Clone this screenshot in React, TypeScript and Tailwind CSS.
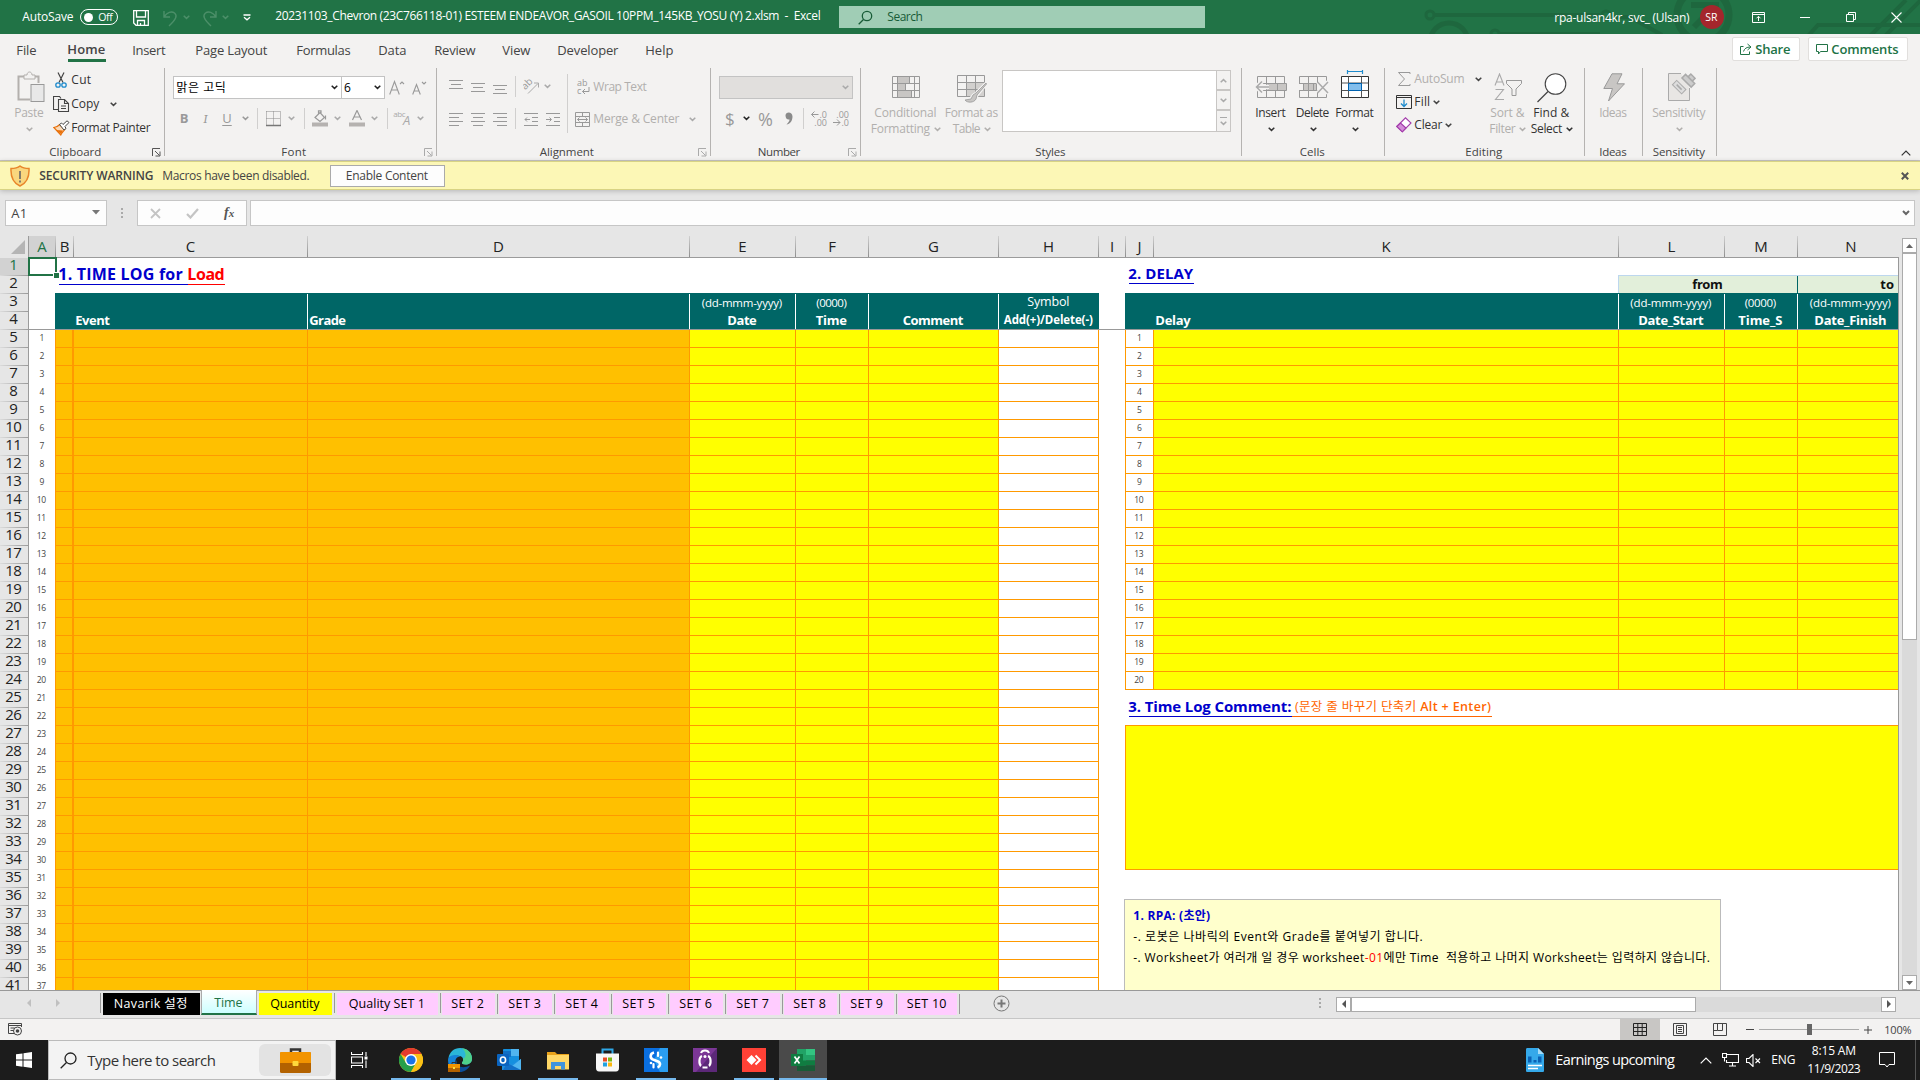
import React, { useLayoutEffect, useRef, useState } from "react";

type Kids = { children?: React.ReactNode };

/** Single line of text whose tracking is adjusted so that it fills `w` pixels. */
function T({ w, className = "", children }: Kids & { w: number; className?: string }) {
  const ref = useRef<HTMLSpanElement>(null);
  const [track, setTrack] = useState(0);
  useLayoutEffect(() => {
    const el = ref.current;
    if (!el) return;
    const n = (el.textContent || "").length;
    const natural = el.getBoundingClientRect().width;
    if (n > 1) setTrack((w - natural) / n);
  }, [w]);
  return (
    <span className={"block shrink-0 whitespace-pre -indent-[0.7px] " + className} style={{ width: w, letterSpacing: track }}>
      <span ref={ref}>{children}</span>
    </span>
  );
}

function Svg({ w, h, className = "", children }: Kids & { w: number; h: number; className?: string }) {
  return (
    <svg width={w} height={h} viewBox={`0 0 ${w} ${h}`} fill="none" className={"block shrink-0 " + className}>
      {children}
    </svg>
  );
}

const Chev = ({ className = "text-[#444]" }: { className?: string }) => (
  <Svg w={7} h={5} className={className}>
    <path d="M0.7 0.8 3.5 3.4 6.3 0.8" stroke="currentColor" strokeWidth="1.5" />
  </Svg>
);

const Launcher = ({ className = "text-[#aaa]" }: { className?: string }) => (
  <Svg w={9} h={9} className={className}>
    <path d="M0.5 8V0.5H8M3 3l4.5 4.5M8 3.5V8H3.5" stroke="currentColor" />
  </Svg>
);

const Sep = ({ className = "h-[21px]" }: { className?: string }) => <div className={"w-px shrink-0 bg-[#d0cfce] " + className} />;

/* ---------------------------------------------------------------- title bar */

function Circuit() {
  return (
    <svg width="500" height="34" viewBox="1420 0 500 34" fill="none" stroke="#1d6039" strokeWidth="4" className="absolute right-0 top-0 opacity-60">
      <circle cx="1430" cy="15" r="4" strokeWidth="3" />
      <path d="M1434 15H1600" />
      <circle cx="1449" cy="42" r="19" strokeWidth="5" />
      <circle cx="1495" cy="34" r="4" strokeWidth="3" />
      <path d="M1500 34h100" />
      <circle cx="1606" cy="15" r="4" strokeWidth="3" />
      <path d="M1612 17h18l32 18" />
      <circle cx="1703" cy="15" r="26" strokeWidth="7" />
      <path d="M1691 5h25v20M1714 7l-20 20" strokeWidth="6" />
      <path d="M1808 36l10-11h102M1870 36l36-36M1885 36l36-36" />
    </svg>
  );
}

function TitleBar() {
  return (
    <div className="relative flex h-[34px] items-center bg-[#217346] text-[12px] text-white">
      <Circuit />
      <div className="relative flex h-full w-full items-center">
        <T w={51} className="ml-[23px]">AutoSave</T>
        <div className="ml-[6px] flex h-[16px] w-[38px] items-center rounded-full border border-white">
          <div className="ml-[3px] size-[9px] rounded-full bg-white" />
          <T w={14} className="ml-[6px] text-[10.500px]">Off</T>
        </div>
        <Svg w={16} h={16} className="ml-[15px] mt-[2px]">
          <path d="M0.7 0.7h14.6v14.6H3L0.7 13zM3.5 1v6h9V1M4.5 15v-4.5h7V15M7.5 13v2" stroke="#fff" strokeWidth="1.3" />
        </Svg>
        <Svg w={15} h={17} className="ml-[14px] mt-[2px] text-[#4c8f69]">
          <path d="M1 1v6h6M1.3 6.5C4 2.500 8.500.8 11.500 3c3 2.500 2 6-5.500 13" stroke="currentColor" strokeWidth="1.4" />
        </Svg>
        <div className="ml-[5px]"><Chev className="text-[#4c8f69]" /></div>
        <Svg w={15} h={17} className="ml-[12px] mt-[2px] text-[#4c8f69]">
          <path d="M14 1v6H8M13.700 6.500C11 2.500 6.500.8 3.500 3c-3 2.500-2 6 5.500 13" stroke="currentColor" strokeWidth="1.4" />
        </Svg>
        <div className="ml-[5px]"><Chev className="text-[#4c8f69]" /></div>
        <Svg w={8} h={7} className="ml-[14px]">
          <path d="M0.500 1h7M1 3.300l3 2.500 3-2.500" stroke="#fff" strokeWidth="1.3" />
        </Svg>
        <T w={545} className="ml-[25px] mb-[2px]">{"20231103_Chevron (23C766118-01) ESTEEM ENDEAVOR_GASOIL 10PPM_145KB_YOSU (Y) 2.xlsm  -  Excel"}</T>
        <div className="ml-[18px] flex h-[22px] w-[366px] items-center bg-[#a0cdb5] text-[#185c37]">
          <Svg w={15} h={15} className="ml-[19px]">
            <circle cx="9" cy="6" r="4.700" stroke="currentColor" strokeWidth="1.3" />
            <path d="M5.500 9.500 0.700 14.300" stroke="currentColor" strokeWidth="1.3" />
          </Svg>
          <T w={35} className="ml-[15px]">Search</T>
        </div>
        <T w={135} className="ml-[350px] mt-[1px]">rpa-ulsan4kr, svc_ (Ulsan)</T>
        <div className="ml-[10px] flex size-[24px] items-center justify-center rounded-full bg-[#a4262c] text-[10.500px]"><T w={12}>SR</T></div>
        <Svg w={13} h={11} className="ml-[28px]">
          <path d="M0.500 0.500h12v10H0.500zM1 2.500h11M6.500 9V4.500M4.500 6.300l2-2 2 2" stroke="#fff" />
        </Svg>
        <div className="ml-[35px] h-px w-[10px] bg-white" />
        <Svg w={10} h={10} className="ml-[36px]">
          <path d="M0.500 2.500h7v7h-7zM2.500 2.500v-2h7v7h-2" stroke="#fff" />
        </Svg>
        <Svg w={11} h={11} className="ml-[35px]">
          <path d="M0.500 0.500l10 10M10.500 0.500l-10 10" stroke="#fff" strokeWidth="1.1" />
        </Svg>
      </div>
    </div>
  );
}

/* --------------------------------------------------------------------- tabs */

function TabRow() {
  return (
    <div className="flex h-[34px] items-start text-[13px] text-[#444]">
      <div className="flex h-[32px] items-center">
        <T w={20} className="ml-[17px]">File</T>
        <div className="ml-[31px] flex h-[32px] w-[38px] flex-col font-semibold">
          <div className="flex h-[25px] items-end pb-[3px]"><T w={38}>Home</T></div>
          <div className="h-[3px] bg-[#217346]" />
        </div>
        <T w={33} className="ml-[27px]">Insert</T>
        <T w={72} className="ml-[30px]">Page Layout</T>
        <T w={54} className="ml-[29px]">Formulas</T>
        <T w={28} className="ml-[28px]">Data</T>
        <T w={41} className="ml-[28px]">Review</T>
        <T w={28} className="ml-[27px]">View</T>
        <T w={61} className="ml-[27px]">Developer</T>
        <T w={28} className="ml-[27px]">Help</T>
      </div>
      <div className="ml-auto mr-[12px] mt-[3px] flex gap-[8px] font-semibold text-[#217346]">
        <div className="flex h-[24px] w-[68px] items-center rounded-[2px] border border-[#e1dfdd] bg-white">
          <Svg w={12} h={12} className="ml-[7px]">
            <path d="M3.500 3.500h-3v8h9V8.500M7.500 1l3.500 3-3.500 3M10.500 4C6.500 4 4.500 5.500 3.500 8.500" stroke="currentColor" />
          </Svg>
          <T w={35} className="ml-[4px]">Share</T>
        </div>
        <div className="flex h-[24px] w-[100px] items-center rounded-[2px] border border-[#e1dfdd] bg-white">
          <Svg w={12} h={11} className="ml-[7px]">
            <path d="M0.500 0.500h11v7H4.500L2.500 10V7.500h-2z" stroke="currentColor" />
          </Svg>
          <T w={67} className="ml-[4px]">Comments</T>
        </div>
      </div>
    </div>
  );
}

/* ------------------------------------------------------------------- ribbon */

function Group({ width, label, labelW, launcher, children }: Kids & { width: string; label: string; labelW: number; launcher?: string }) {
  return (
    <div className={"flex h-[88px] shrink-0 flex-col border-r border-[#b5b3b1] " + width}>
      <div className="flex h-[76px] shrink-0">{children}</div>
      <div className="flex h-[16px] shrink-0 items-center text-[11.500px] text-[#444]">
        <div className="flex grow justify-center">
          <T w={labelW}>{label}</T>
        </div>
        {launcher && <div className="mr-[3px] w-[9px]"><Launcher className={launcher} /></div>}
      </div>
    </div>
  );
}

const Lines = ({ d, className = "" }: { d: string; className?: string }) => (
  <Svg w={14} h={14} className={className}>
    <path d={d} stroke="#999" />
  </Svg>
);

function ClipboardGroup() {
  return (
    <Group width="w-[165px]" label="Clipboard" labelW={52} launcher="text-[#555]">
      <div className="ml-[15px] flex w-[29px] flex-col items-center pt-[3px]">
        <Svg w={28} h={32} className="ml-[2px]">
          <path d="M8 5.500H1.500v23H13M17 5.500h4.500V12" stroke="#b3b0ad" strokeWidth="2" />
          <path d="M7 8V4h3c0-4 5-4 5 0h3v4z" fill="#f3f2f1" stroke="#b3b0ad" />
          <rect x="14" y="13.500" width="13" height="17" fill="#e8e8e8" stroke="#999" />
        </Svg>
        <T w={29} className="mt-[4px] text-[12px] text-[#b1afad]">Paste</T>
        <div className="mt-[8px]"><Chev className="text-[#b1afad]" /></div>
      </div>
      <div className="ml-[9px] flex flex-col text-[12px] text-[#333]">
        <div className="flex h-[24px] items-center">
          <Svg w={16} h={16} className="ml-0">
            <path d="M5 0.500l5 10M11 0.500l-5 10" stroke="#444" strokeWidth="1.2" />
            <circle cx="5" cy="13" r="2.200" stroke="#1e8bcd" strokeWidth="1.300" />
            <circle cx="11" cy="13" r="2.200" stroke="#1e8bcd" strokeWidth="1.300" />
          </Svg>
          <T w={20} className="ml-[3px]">Cut</T>
        </div>
        <div className="flex h-[24px] items-center">
          <Svg w={17} h={16}>
            <path d="M5.500 13.500h-5V0.500h6l1.500 2M5.500 3.500h6l4 4v8h-10zM11.500 3.500v4h4M8 10h5M8 12.500h5" stroke="#444" strokeWidth="1.1" />
          </Svg>
          <T w={28} className="ml-[2px]">Copy</T>
          <div className="ml-[10px]"><Chev /></div>
        </div>
        <div className="flex h-[24px] items-center">
          <Svg w={17} h={16}>
            <path d="M0.800 7.500c3 0 4.500-1.500 6-3l5 5c-1.500 2-3 3.500-4 5.500z" fill="#fbd9b5" stroke="#e8700a" strokeWidth="1.200" />
            <path d="M3 10l5 4 2-3.500z" fill="#e8700a" />
            <path d="M6.500 4.500l2-1.500L10 4.500 14 0.800 16 2.500 12 6.500l1 2-2 1.500z" fill="#fff" stroke="#444" />
          </Svg>
          <T w={79} className="ml-[2px]">Format Painter</T>
        </div>
      </div>
    </Group>
  );
}

function FontGroup() {
  return (
    <Group width="w-[272px]" label="Font" labelW={25} launcher="text-[#aaa]">
      <div className="flex flex-col pl-[8px] pt-[8px]">
        <div className="flex h-[23px] items-center">
          <div className="flex h-[23px] w-[169px] items-center border border-[#c3c3c3] bg-white text-[12px] text-black">
            <T w={50} className="ml-[3px]">맑은 고딕</T>
            <div className="ml-auto mr-[3px]"><Chev className="text-[#222]" /></div>
          </div>
          <div className="flex h-[23px] w-[43px] items-center border border-l-0 border-[#c3c3c3] bg-white text-[12px]">
            <span className="ml-[2px]">6</span>
            <div className="ml-auto mr-[3px]"><Chev className="text-[#222]" /></div>
          </div>
          <Svg w={16} h={16} className="ml-[4px] text-[#999]">
            <path d="M0.700 14.500 5.500 1.500 10.300 14.500M2.300 10h6.400M11 4l2-2 2 2" stroke="currentColor" strokeWidth="1.1" />
          </Svg>
          <Svg w={15} h={16} className="ml-[7px] text-[#999]">
            <path d="M0.700 14.500 4.500 4.500 8.300 14.500M2 11h5M10 2l2 2 2-2" stroke="currentColor" strokeWidth="1.1" />
          </Svg>
        </div>
        <div className="mt-[9px] flex h-[21px] items-center text-[13px] text-[#999]">
          <span className="w-[22px] text-center font-bold">B</span>
          <span className="w-[21px] text-center font-serif italic">I</span>
          <span className="w-[22px] text-center underline underline-offset-2">U</span>
          <div className="ml-[4px]"><Chev className="text-[#999]" /></div>
          <Sep className="ml-[8px] h-[21px]" />
          <Svg w={15} h={16} className="ml-[8px]">
            <path d="M0.500 0.500h14M0.500 0.500v14M14.500 0.500v14M7.500 0.500v14M0.500 7.500h14" stroke="#888" strokeDasharray="1 1" />
            <path d="M0 14.500h15" stroke="#777" strokeWidth="1.500" />
          </Svg>
          <div className="ml-[7px]"><Chev className="text-[#aaa]" /></div>
          <Sep className="ml-[9px] h-[21px]" />
          <Svg w={16} h={17} className="ml-[7px]">
            <path d="M3 7.500l5-5 4.500 5-4.500 4zM6.500 4V0.800h2.500v3M13.500 5.500v4" stroke="#999" strokeWidth="1.200" />
            <path d="M0 12.500h16v4H0z" fill="#b5b2b0" />
          </Svg>
          <div className="ml-[6px]"><Chev className="text-[#aaa]" /></div>
          <Svg w={16} h={17} className="ml-[8px]">
            <path d="M3.500 10 8 0.500 12.500 10M5 7h6" stroke="#999" strokeWidth="1.200" />
            <path d="M0 12.500h16v4H0z" fill="#b5b2b0" />
          </Svg>
          <div className="ml-[6px]"><Chev className="text-[#aaa]" /></div>
          <Sep className="ml-[9px] h-[21px]" />
          <div className="ml-[6px] flex h-[18px] w-[17px] items-start text-[#aaa]">
            <T w={12} className="text-[8px]">abc</T>
            <span className="-ml-[3px] mt-[4px] text-[13px] italic">A</span>
          </div>
          <div className="ml-[6px]"><Chev className="text-[#aaa]" /></div>
        </div>
      </div>
    </Group>
  );
}

function AlignmentGroup() {
  return (
    <Group width="w-[274px]" label="Alignment" labelW={54} launcher="text-[#aaa]">
      <div className="flex flex-col pl-[12px] pt-[8px]">
        <div className="flex h-[21px] items-center">
          <Lines className="mb-[4px]" d="M0 2.500h14M2 6.500h10M0 10.500h14" />
          <Lines className="ml-[8px]" d="M0 3.500h14M2 7.500h10M0 11.500h14" />
          <Lines className="ml-[8px] mt-[4px]" d="M0 3.500h14M2 7.500h10M0 11.500h14" />
          <Sep className="ml-[8px] h-[21px]" />
          <Svg w={17} h={17} className="ml-[7px]">
            <path d="M5 15.500 15 5.500M11 5h4.500v4.500" stroke="#aaa" />
            <text x="0" y="9" fill="#999" fontSize="10" transform="rotate(-45 5 8)">ab</text>
          </Svg>
          <div className="ml-[4px]"><Chev className="text-[#aaa]" /></div>
        </div>
        <div className="mt-[11px] flex h-[21px] items-center">
          <Lines d="M0 1.500h14M0 5.500h10M0 9.500h14M0 13.500h10" />
          <Lines className="ml-[8px]" d="M0 1.500h14M2 5.500h10M0 9.500h14M2 13.500h10" />
          <Lines className="ml-[8px]" d="M0 1.500h14M4 5.500h10M0 9.500h14M4 13.500h10" />
          <Sep className="ml-[8px] h-[21px]" />
          <Lines className="ml-[8px]" d="M0 1.500h14M8 5.500h6M8 9.500h6M0 13.500h14M1 7.500h5M3 5.500l-2 2 2 2" />
          <Lines className="ml-[8px]" d="M0 1.500h14M8 5.500h6M8 9.500h6M0 13.500h14M0 7.500h5M3.500 5.500l2 2-2 2" />
        </div>
      </div>
      <Sep className="ml-[7px] mt-[6px] h-[59px]" />
      <div className="flex flex-col pl-[7px] pt-[7px] text-[12px] text-[#b1afad]">
        <div className="flex h-[24px] items-center">
          <div className="flex w-[19px] flex-col pl-[2px] text-[9px] text-[#999]">
            <span className="h-[8px] leading-[8px]">ab</span>
            <span className="flex h-[8px] items-center leading-[8px]">
              c
              <Svg w={9} h={8}>
                <path d="M8 0v4.500H1.500M4 2 1.500 4.500 4 7" stroke="#999" />
              </Svg>
            </span>
          </div>
          <T w={53}>Wrap Text</T>
        </div>
        <div className="mt-[8px] flex h-[24px] items-center">
          <Svg w={15} h={15}>
            <path d="M0.500 0.500h14v14h-14zM0.500 4.500h14M0.500 10.500h14M7.500 0.500v4M7.500 10.500v4M2.500 7.500h10M4.500 5.500l-2 2 2 2M10.500 5.500l2 2-2 2" stroke="#999" />
          </Svg>
          <T w={86} className="ml-[4px]">Merge &amp; Center</T>
          <div className="ml-[9px]"><Chev className="text-[#aaa]" /></div>
        </div>
      </div>
    </Group>
  );
}

const Decimal = ({ a, b, left }: { a: string; b: string; left?: boolean }) => (
  <div className="flex w-[16px] flex-col items-end text-[9px] text-[#999]">
    <span className="flex h-[8px] items-center leading-[8px]">
      {left && <Svg w={8} h={7}><path d="M0.500 3.500h7M3.500 0.500l-3 3 3 3" stroke="#999" /></Svg>}
      {a}
    </span>
    <span className="flex h-[8px] items-center leading-[8px]">
      {!left && <Svg w={8} h={7}><path d="M0 3.500h7M4 0.500l3 3-3 3" stroke="#999" /></Svg>}
      {b}
    </span>
  </div>
);

function NumberGroup() {
  return (
    <Group width="w-[150px]" label="Number" labelW={42} launcher="text-[#aaa]">
      <div className="flex flex-col pl-[8px] pt-[8px]">
        <div className="flex h-[23px] w-[134px] items-center justify-end border border-[#c3c3c3] bg-[#e1dfdd] pr-[3px]">
          <Chev className="text-[#aaa]" />
        </div>
        <div className="mt-[9px] flex h-[21px] items-center text-[#999]">
          <span className="ml-[6px] w-[9px] text-[17px]">$</span>
          <div className="ml-[9px]"><Chev className="text-[#222]" /></div>
          <span className="ml-[8px] w-[17px] text-[18px]">%</span>
          <Svg w={8} h={13} className="ml-[10px]">
            <path d="M0.500 3.500C0.500-0.500 7.500-0.500 7.500 4.500 7.500 9 5 12 1.500 12.500 3.500 10.500 4.500 9 4.500 7.500 2 8 0.500 6 0.500 3.500z" fill="#8a8a8a" />
          </Svg>
          <Sep className="ml-[10px] h-[21px]" />
          <div className="ml-[7px]"><Decimal a=".0" b=".00" left /></div>
          <div className="ml-[6px]"><Decimal a=".00" b=".0" /></div>
        </div>
      </div>
    </Group>
  );
}

/** Large ribbon button: picture on top, one or two text lines below. */
function Big({ width, icon, a, aw, b, bw = 0, dim, chevron = true }: { width: string; icon: React.ReactNode; a: string; aw: number; b?: string; bw?: number; dim?: boolean; chevron?: boolean }) {
  const tone = dim ? "text-[#b1afad]" : "text-[#333]";
  return (
    <div className={"flex shrink-0 flex-col items-center text-[12px] " + width + " " + tone}>
      <div className="flex h-[37px] items-center justify-center">{icon}</div>
      <div className="flex h-[16px] items-center"><T w={aw}>{a}</T></div>
      <div className="flex h-[16px] items-center gap-[3px]">
        {b && <T w={bw}>{b}</T>}
        {chevron && <Chev className={tone} />}
      </div>
    </div>
  );
}

function StylesGroup() {
  return (
    <Group width="w-[381px]" label="Styles" labelW={30}>
      <Big
        dim width="ml-[10px] w-[70px]" a="Conditional" aw={62} b="Formatting" bw={59}
        icon={
          <Svg w={28} h={22}>
            <path d="M5.500 0.500h12v7h-12zM5.500 7.500h8v7h-8zM5.500 14.500h14v7h-14z" fill="#c8c6c4" />
            <path d="M0.500 0.500h27v21h-27zM0.500 7.500h27M0.500 14.500h27M5.500 0.500v21M22.500 0.500v21M17.500 0.500v7M13.500 7.500v7M19.500 14.500v7" stroke="#999" />
          </Svg>
        }
      />
      <Big
        dim width="ml-[4px] w-[54px]" a="Format as" aw={53} b="Table" bw={27}
        icon={
          <Svg w={30} h={28} className="mt-[5px]">
            <path d="M9.500 7.500h18v14h-18z" fill="#d2d0ce" />
            <path d="M0.500 0.500h27v21h-27zM0.500 7.500h27M0.500 14.500h27M9.500 0.500v21M18.500 0.500v21" stroke="#999" />
            <path d="M29 8 19 18l-3 2-3 4-5 1c2 3 9 3 11-1l1-3L29.500 9z" fill="#c8c6c4" stroke="#f3f2f1" strokeWidth="2.500" />
            <path d="M29 8 19 18l-3 2-2 4-6 1c2 3 9 3 11-1l1-4L29.500 9z" fill="#c8c6c4" stroke="#999" strokeWidth="0.800" />
          </Svg>
        }
      />
      <div className="ml-[3px] mt-[2px] flex h-[62px] w-[229px] border border-[#c8c6c4] bg-white">
        <div className="ml-auto flex w-[14px] flex-col border-l border-[#c8c6c4] bg-[#f3f2f1]">
          <div className="flex h-[20px] items-center justify-center border-b-2 border-[#c8c6c4]"><div className="rotate-180"><Chev className="text-[#aaa]" /></div></div>
          <div className="flex h-[20px] items-center justify-center border-b-2 border-[#c8c6c4]"><Chev className="text-[#aaa]" /></div>
          <div className="flex grow flex-col items-center justify-center gap-[3px]"><div className="h-px w-[7px] bg-[#aaa]" /><Chev className="text-[#aaa]" /></div>
        </div>
      </div>
    </Group>
  );
}

function CellsGroup() {
  return (
    <Group width="w-[143px]" label="Cells" labelW={25}>
      <Big
        width="ml-[8px] w-[42px]" a="Insert" aw={30}
        icon={
          <Svg w={32} h={22}>
            <path d="M2.500 0.500h27v21h-27zM2.500 7.500h27M2.500 14.500h27M11.500 0.500v21M20.500 0.500v21" stroke="#999" />
            <path d="M13 7.500h18.500v7H13z" fill="#c8c6c4" stroke="#999" />
            <path d="M22.500 7.500v7" stroke="#999" />
            <path d="M14 11H1.500M7 5.500 1.500 11 7 16.500" stroke="#f3f2f1" strokeWidth="4.500" />
            <path d="M14 11H1.500M7 5.500 1.500 11 7 16.500" stroke="#aaa" strokeWidth="1.500" />
          </Svg>
        }
      />
      <Big
        width="w-[42px]" a="Delete" aw={33}
        icon={
          <Svg w={30} h={22} className="ml-[2px]">
            <path d="M0.500 7V0.500h27V7M0.500 15v6.500h27V15M9.500 0.500v7M18.500 0.500v7M9.500 14.500v7M18.500 14.500v7M0 7.500h22M0 14.500h22" stroke="#999" />
            <path d="M4.500 7.500h13v7h-13z" fill="#c8c6c4" stroke="#999" />
            <path d="M9.500 7.500v7M14.500 7.500v7" stroke="#999" />
            <path d="M19 6l10 11M29 6 19 17" stroke="#f3f2f1" strokeWidth="4.500" />
            <path d="M18.500 6l10.500 11M29 6 18.500 17" stroke="#aaa" strokeWidth="1.500" />
          </Svg>
        }
      />
      <Big
        width="w-[42px]" a="Format" aw={38}
        icon={
          <Svg w={28} h={28} className="-mt-[6px]">
            <path d="M6.500 0v4M21.500 0v4M6.500 1.500h15" stroke="#1e8bcd" strokeWidth="1.200" />
            <path d="M0.500 6.500h27v21h-27z" fill="#fff" stroke="#333" />
            <path d="M0.500 13h27M0.500 20.500h27M7.500 6.500v21M20.500 6.500v21" stroke="#555" />
            <path d="M7.500 13.500h13v7h-13z" fill="#83beec" stroke="#0063b1" />
          </Svg>
        }
      />
    </Group>
  );
}

function EditingGroup() {
  return (
    <Group width="w-[200px]" label="Editing" labelW={37}>
      <div className="ml-[11px] flex w-[88px] flex-col text-[12px] text-[#333]">
        <div className="flex h-[22px] items-center text-[#b1afad]">
          <Svg w={17} h={16}>
            <path d="M14 3V1.500H2.500L8.500 8l-6 6.500H14V13" stroke="#999" />
          </Svg>
          <T w={50} className="ml-[2px]">AutoSum</T>
          <div className="ml-[10px]"><Chev /></div>
        </div>
        <div className="flex h-[24px] items-center">
          <Svg w={17} h={14}>
            <path d="M0.500 0.500h15v13h-15zM0.500 2.500h15" stroke="#333" />
            <path d="M8 4.500v7M5 8.500l3 3 3-3" stroke="#1e8bcd" strokeWidth="1.300" />
          </Svg>
          <T w={16} className="ml-[2px]">Fill</T>
          <div className="ml-[2px]"><Chev /></div>
        </div>
        <div className="flex h-[22px] items-center">
          <Svg w={17} h={16}>
            <path d="M0.800 9.500 9.500 0.800 15 6 6.300 14.800z" fill="#fff" stroke="#a33bab" strokeWidth="1.100" />
            <path d="M0.800 9.500 4.500 6l5.500 5-3.700 3.800z" fill="#d38fd8" stroke="#a33bab" strokeWidth="1.100" />
          </Svg>
          <T w={28} className="ml-[2px]">Clear</T>
          <div className="ml-[2px]"><Chev /></div>
        </div>
      </div>
      <Big
        dim width="ml-[2px] w-[44px]" a={"Sort &"} aw={34} b="Filter" bw={26}
        icon={
          <Svg w={29} h={28} className="mt-[1px]">
            <path d="M1 12.500 5.500 1l4.500 11.500M2.500 9h6M1.500 16.500h8L1.500 26.500h8.500" stroke="#aaa" strokeWidth="1.100" />
            <path d="M12.500 7.500h15v3l-5.500 5.500v6.500h-4V16l-5.500-5.500z" stroke="#999" />
          </Svg>
        }
      />
      <Big
        width="w-[44px]" a={"Find &"} aw={36} b="Select" bw={31}
        icon={
          <Svg w={30} h={30} className="mt-[2px]">
            <circle cx="18.500" cy="11" r="10.300" fill="#fff" stroke="#444" strokeWidth="1.100" />
            <path d="M11 18.500 0.500 29" stroke="#444" strokeWidth="1.300" />
          </Svg>
        }
      />
    </Group>
  );
}

function Ribbon() {
  return (
    <div className="flex h-[93px] border-b border-[#c8c6c4]">
      <ClipboardGroup />
      <FontGroup />
      <AlignmentGroup />
      <NumberGroup />
      <StylesGroup />
      <CellsGroup />
      <EditingGroup />
      <Group width="w-[58px]" label="Ideas" labelW={27}>
        <Big
          dim chevron={false} width="w-[57px]" a="Ideas" aw={27}
          icon={
            <Svg w={22} h={29} className="mt-[1px]">
              <path d="M9 0.800h10l-5 10h7.500L5.500 28l4-12.500H0.800z" fill="#c8c6c4" stroke="#999" />
            </Svg>
          }
        />
      </Group>
      <Group width="w-[74px]" label="Sensitivity" labelW={52}>
        <Big
          dim width="w-[73px]" a="Sensitivity" aw={53}
          icon={
            <Svg w={28} h={31} className="ml-[4px]">
              <path d="M13 2.500H0.500v27h21V17" fill="#e8e6e4" stroke="#aaa" />
              <g transform="rotate(45 14 14)">
                <path d="M7 14.500h13v6H7z" fill="#ddd" stroke="#aaa" />
                <path d="M10 17.500h7" stroke="#aaa" strokeWidth="1.500" />
                <path d="M9 4h13v5H9zM12.500 4V0h6v4" fill="#ccc" stroke="#aaa" strokeWidth="1.500" />
              </g>
            </Svg>
          }
        />
      </Group>
      <Svg w={10} h={6} className="ml-auto mr-[9px] mt-[82px]">
        <path d="M0.700 5.300 5 1l4.300 4.300" stroke="#333" strokeWidth="1.200" />
      </Svg>
    </div>
  );
}

/* ---------------------------------------------------- message + formula bar */

function WarningBar() {
  return (
    <div className="relative z-10 flex h-[29px] items-center border-y border-[#d8d384] bg-[#fcf7b6] text-[12px] text-[#444] shadow-[0_1px_5px_rgba(0,0,0,0.22)]">
      <Svg w={20} h={22} className="ml-[10px]">
        <path d="M10 1C7.500 3 4 3.500 1 3.500c-.5 9 2 14.500 9 17.500 7-3 9.500-8.500 9-17.500-3 0-6.500-.5-9-2.500z" fill="#f9d77e" stroke="#e8852a" strokeWidth="1.500" />
        <path d="M10 6v8M10 15.500v2" stroke="#666" strokeWidth="1.600" />
      </Svg>
      <T w={114} className="ml-[10px] font-semibold">SECURITY WARNING</T>
      <T w={147} className="ml-[9px]">Macros have been disabled.</T>
      <div className="ml-[20px] flex h-[22px] w-[115px] items-center justify-center border border-[#aaa] bg-[#fdfdfd]">
        <T w={82}>Enable Content</T>
      </div>
      <Svg w={8} h={8} className="ml-auto mr-[11px]">
        <path d="M0.800 0.800l6.400 6.400M7.200 0.800 0.800 7.200" stroke="#555" strokeWidth="2" />
      </Svg>
    </div>
  );
}

const Dots = () => (
  <div className="flex w-[2px] flex-col gap-[2px]">
    <div className="size-[2px] bg-[#aaa]" />
    <div className="size-[2px] bg-[#aaa]" />
    <div className="size-[2px] bg-[#aaa]" />
  </div>
);

function FormulaBar() {
  return (
    <div className="flex h-[46px] items-start pl-[5px] pr-[5px] pt-[10px]">
      <div className="flex h-[26px] w-[102px] items-center border border-[#c6c6c6] bg-[#fdfdfd] text-[13px] text-[#444]">
        <T w={16} className="ml-[6px]">A1</T>
        <Svg w={8} h={5} className="ml-auto mr-[6px] mb-[2px]"><path d="M0 0h8L4 4.500z" fill="#777" /></Svg>
      </div>
      <div className="ml-[14px] mt-[8px]"><Dots /></div>
      <div className="ml-[14px] flex h-[26px] w-[110px] items-center border border-[#c6c6c6] bg-[#fdfdfd]">
        <Svg w={11} h={11} className="ml-[12px]"><path d="M1 1l9 9M10 1l-9 9" stroke="#c4c4c4" strokeWidth="1.800" /></Svg>
        <Svg w={13} h={11} className="ml-[25px]"><path d="M1 6l3.500 3.500L12 1" stroke="#c4c4c4" strokeWidth="2.200" /></Svg>
        <span className="ml-[25px] font-['Liberation_Serif',serif] text-[14px] font-bold italic text-[#555]">f<span className="text-[11px]">x</span></span>
      </div>
      <div className="ml-[3px] flex h-[26px] grow items-center justify-end border border-[#c6c6c6] bg-[#fdfdfd] pr-[4px]">
        <Svg w={8} h={6}><path d="M1 1l3 3 3-3" stroke="#666" strokeWidth="2" /></Svg>
      </div>
    </div>
  );
}

/* -------------------------------------------------------------------- sheet */

const COLUMNS: [string, string][] = [
  ["A", "w-[27px]"], ["B", "w-[18px]"], ["C", "w-[234px]"], ["D", "w-[382px]"], ["E", "w-[106px]"],
  ["F", "w-[73px]"], ["G", "w-[130px]"], ["H", "w-[100px]"], ["I", "w-[27px]"], ["J", "w-[28px]"],
  ["K", "w-[465px]"], ["L", "w-[106px]"], ["M", "w-[73px]"], ["N", "w-[106px]"],
];

function ColumnHeaders() {
  return (
    <div className="flex h-[22px] shrink-0 text-[15px] text-[#222]">
      <div className="flex h-[21px] w-[28px] shrink-0 items-end justify-end pb-[3px] pr-[3px]">
        <Svg w={14} h={14}><path d="M14 0v14H0z" fill="#b5b5b5" /></Svg>
      </div>
      <div className="w-px shrink-0 bg-[#9b9b9b]" />
      {COLUMNS.map(([name, width], i) => (
        <div key={name} className={"flex h-[22px] shrink-0 border-b " + width + (i === 0 ? " border-[#217346] bg-[#d2d2d2] text-[#217346]" : " border-[#9b9b9b]")}>
          <div className="flex grow items-center justify-center">{name}</div>
          {name !== "N" && <div className="h-[21px] w-px bg-linear-to-b from-[#d0d0d0] to-[#8f8f8f]" />}
        </div>
      ))}
    </div>
  );
}

function RowHeaders() {
  return (
    <div className="flex w-[29px] shrink-0 flex-col border-r border-[#9b9b9b] text-[15px] text-[#222]">
      {Array.from({ length: 41 }, (_, i) => (
        <div key={i} className={"flex h-[18px] shrink-0 flex-col " + (i === 0 ? "bg-[#d2d2d2] text-[#217346]" : "")}>
          <div className="flex h-[17px] items-center justify-center pb-[4px]">
            <T w={i < 9 ? 8 : 16}>{String(i + 1)}</T>
          </div>
          <div className="h-px shrink-0 bg-linear-to-r from-[#dcdcdc] to-[#9b9b9b]" />
        </div>
      ))}
    </div>
  );
}

function ColumnA() {
  return (
    <div className="flex w-[26px] shrink-0 flex-col">
      <div className="relative z-10 -ml-[1px] -mt-[1px] h-[19px] w-[29px] shrink-0 border-2 border-[#217346]">
        <div className="absolute -bottom-[4px] -right-[4px] size-[6px] border-l border-t border-white bg-[#217346]" />
      </div>
      <div className="h-[54px] shrink-0 border-b border-[#999]" />
      {Array.from({ length: 37 }, (_, i) => (
        <div key={i} className="flex h-[18px] shrink-0 items-center justify-center pb-px text-[8.500px] text-[#444]">
          {i < 9 ? i + 1 : <T w={9}>{String(i + 1)}</T>}
        </div>
      ))}
    </div>
  );
}

const TH = ({ width, top, tw = 0, name, nw, last, left, small }: { width: string; top?: string; tw?: number; name: string; nw: number; last?: boolean; left?: string; small?: boolean }) => (
  <div className={"flex h-[35px] shrink-0 flex-col " + width + (left ? "" : " items-center") + (last ? "" : " border-r border-white")}>
    <div className={"flex h-[17px] shrink-0 items-center " + (small ? "text-[12.500px]" : "text-[11.500px]")}>{top && <T w={tw}>{top}</T>}</div>
    <div className={"flex h-[18px] shrink-0 items-center font-bold " + (small ? "text-[11.500px] " : "text-[13px] ") + (left || "")}>
      <T w={nw}>{name}</T>
    </div>
  </div>
);

const BODY_COLS = [
  "w-[18px] bg-[#ffc000] border-r-2",
  "w-[234px] bg-[#ffc000] border-r",
  "w-[382px] bg-[#ffc000] border-r",
  "w-[106px] bg-[#ffff00] border-r",
  "w-[73px] bg-[#ffff00] border-r",
  "w-[130px] bg-[#ffff00] border-r",
  "w-[100px] bg-white border-r",
];

function TimeLog() {
  return (
    <div className="flex w-[1044px] shrink-0 flex-col">
      <div className="flex h-[35px] shrink-0 items-center pl-[4px] text-[16px] font-bold">
        <div className="flex">
          <T w={129} className="border-b border-[#0000cc] pb-[2px] text-[#0000cc]">{"1. TIME LOG for "}</T>
          <T w={37} className="border-b border-[#ff0000] pb-[2px] text-[#ff0000]">Load</T>
        </div>
      </div>
      <div className="flex h-[37px] shrink-0 border-b border-[#999] bg-[#006666] pt-px text-white">
        <TH width="w-[253px]" name="Event" nw={34} left="pl-[21px]" />
        <TH width="w-[382px]" name="Grade" nw={36} left="pl-[2px]" />
        <TH width="w-[106px]" top="(dd-mmm-yyyy)" tw={80} name="Date" nw={29} />
        <TH width="w-[73px]" top="(0000)" tw={30} name="Time" nw={31} />
        <TH width="w-[130px]" name="Comment" nw={60} />
        <TH width="w-[100px]" top="Symbol" tw={42} name="Add(+)/Delete(-)" nw={89} last small />
      </div>
      {Array.from({ length: 37 }, (_, i) => (
        <div key={i} className="flex h-[18px] shrink-0 border-l border-[#ff9900]">
          {BODY_COLS.map((c) => (
            <div key={c} className={"h-[18px] shrink-0 border-b border-[#ff9900] " + c} />
          ))}
        </div>
      ))}
    </div>
  );
}

function DelayTable() {
  return (
    <>
      <div className="flex h-[35px] shrink-0">
        <div className="flex w-[493px] shrink-0 items-center pb-px pl-[4px] text-[15px] font-bold text-[#0000cc]">
          <T w={65} className="border-b border-[#0000cc] pb-[2px]">2. DELAY</T>
        </div>
        <div className="mt-[17px] flex h-[18px] w-[280px] border-t border-[#bdd7ee] bg-[#e2efda] text-[13px] font-bold text-[#111]">
          <div className="flex w-[180px] items-center justify-center border-l border-r border-l-[#bdd7ee] border-r-[#006666] pb-px"><T w={30}>from</T></div>
          <div className="flex grow items-center justify-end pb-px pr-[3px]"><T w={14}>to</T></div>
        </div>
      </div>
      <div className="flex h-[37px] shrink-0 overflow-hidden border-b border-[#999] bg-[#006666] pt-px text-white">
        <TH width="w-[494px]" name="Delay" nw={35} left="pl-[31px]" />
        <TH width="w-[106px]" top="(dd-mmm-yyyy)" tw={81} name="Date_Start" nw={65} />
        <TH width="w-[73px]" top="(0000)" tw={31} name="Time_S" nw={44} />
        <TH width="w-[106px]" top="(dd-mmm-yyyy)" tw={81} name="Date_Finish" nw={72} last />
      </div>
      {Array.from({ length: 20 }, (_, i) => (
        <div key={i} className="flex h-[18px] shrink-0 overflow-hidden border-b border-l border-[#ff9900] bg-[#ffff00]">
          <div className="flex w-[28px] shrink-0 items-center justify-center border-r border-[#ff9900] bg-white text-[8.500px] text-[#444]">
            {i < 9 ? i + 1 : <T w={9}>{String(i + 1)}</T>}
          </div>
          <div className="w-[465px] shrink-0 border-r border-[#ff9900]" />
          <div className="w-[106px] shrink-0 border-r border-[#ff9900]" />
          <div className="w-[73px] shrink-0 border-r border-[#ff9900]" />
        </div>
      ))}
    </>
  );
}

function RightPane() {
  return (
    <div className="flex w-[773px] shrink-0 flex-col">
      <DelayTable />
      <div className="flex h-[35px] shrink-0 items-center pl-[4px]">
        <div className="flex items-end">
          <T w={163} className="border-b border-[#0000cc] pb-[2px] text-[15px] font-bold text-[#0000cc]">3. Time Log Comment:</T>
          <T w={200} className="border-b border-[#ff6600] pb-[2px] text-[12.500px] text-[#ff6600]"> (문장 줄 바꾸기 단축키 <b className="font-semibold">Alt + Enter)</b></T>
        </div>
      </div>
      <div className="h-[145px] shrink-0 border border-r-0 border-[#ff9900] bg-[#ffff00]" />
      <div className="-ml-px mt-[29px] flex h-[100px] w-[597px] shrink-0 flex-col border border-[#bbb] bg-[#ffffcc] pl-[9px] pt-[5px] text-[12px] text-black">
        <div className="flex h-[21px] shrink-0 items-center font-bold text-[#0000cc]"><T w={77}>1. RPA: (초안)</T></div>
        <div className="flex h-[21px] shrink-0 items-center"><T w={290}>-. 로봇은 나바릭의 Event와 Grade를 붙여넣기 합니다.</T></div>
        <div className="flex h-[21px] shrink-0 items-center">
          <T w={577}>-. Worksheet가 여러개 일 경우 worksheet<span className="text-[#ff0000]">-01</span>{"에만 Time  적용하고 나머지 Worksheet는 입력하지 않습니다."}</T>
        </div>
      </div>
    </div>
  );
}

function VScroll() {
  return (
    <div className="ml-[3px] mt-[2px] flex h-[752px] w-[15px] flex-col bg-[#dadada]">
      <div className="flex h-[15px] items-center justify-center border border-[#ababab] bg-white"><Svg w={7} h={4}><path d="M0 4h7L3.500 0z" fill="#666" /></Svg></div>
      <div className="h-[387px] border border-[#ababab] bg-white" />
      <div className="mt-auto flex h-[15px] items-center justify-center border border-[#ababab] bg-white"><Svg w={7} h={4}><path d="M0 0h7L3.500 4z" fill="#666" /></Svg></div>
    </div>
  );
}

function Sheet() {
  return (
    <div className="flex h-[754px] shrink-0">
      <div className="flex w-[1899px] shrink-0 flex-col overflow-hidden">
        <ColumnHeaders />
        <div className="flex h-[732px] shrink-0">
          <RowHeaders />
          <div className="flex h-[732px] w-[1870px] border-r border-[#999] bg-white">
            <ColumnA />
            <TimeLog />
            <div className="w-[26px] shrink-0"><div className="h-[72px] border-b border-[#999]" /></div>
            <RightPane />
          </div>
        </div>
      </div>
      <VScroll />
    </div>
  );
}

/* --------------------------------------------------- sheet tabs, status bar */

const PinkTab = ({ n }: { n: number }) => (
  <div className={"flex h-[22px] items-center pr-[2px] " + (n === 10 ? "w-[63px]" : "w-[57px]")}>
    <div className="flex h-full grow items-center justify-center bg-[#ffccff]"><T w={n === 10 ? 40 : 33}>{"SET " + n}</T></div>
    <div className="ml-[2px] -mr-[2px] h-[20px] w-px bg-[#999]" />
    <div className="w-[1px]" />
  </div>
);

function SheetTabs() {
  return (
    <div className="relative z-10 flex h-[29px] shrink-0 border-b border-t border-[#c6c6c6] border-t-[#999] bg-[#e6e6e6] text-[12.500px] text-black">
      <div className="flex h-[24px] w-full items-center">
        <Svg w={4} h={8} className="ml-[27px]"><path d="M4 0v8L0 4z" fill="#c0c0c0" /></Svg>
        <Svg w={4} h={8} className="ml-[25px]"><path d="M0 0v8l4-4z" fill="#c0c0c0" /></Svg>
        <div className="ml-[40px] h-[20px] w-px bg-[#999]" />
        <div className="ml-[2px] mt-[2px] flex h-[22px] w-[97px] items-center justify-center bg-black text-white"><T w={74}>Navarik 설정</T></div>
        <div className="-mt-[1px] ml-px flex h-[25px] w-[56px] items-center justify-center border-x border-b-2 border-x-[#aaa] border-b-[#217346] bg-linear-to-b from-white to-[#ccffff] pt-[3px] text-[#217346]"><T w={28}>Time</T></div>
        <div className="ml-[2px] mt-[2px] flex h-[22px] w-[73px] items-center justify-center bg-[#ffff00]"><T w={49}>Quantity</T></div>
        <div className="ml-[2px] h-[20px] w-px bg-[#999]" />
        <div className="ml-[2px] mt-[2px] flex h-[22px] w-[101px] items-center justify-center bg-[#ffccff]"><T w={76}>Quality SET 1</T></div>
        <div className="ml-[2px] mr-[1px] h-[20px] w-px bg-[#999]" />
        <div className="mt-[2px] flex">{[2, 3, 4, 5, 6, 7, 8, 9, 10].map((n) => <PinkTab key={n} n={n} />)}</div>
        <Svg w={17} h={17} className="ml-[32px]">
          <circle cx="8.500" cy="8.500" r="7.500" stroke="#777" />
          <path d="M8.500 4.500v8M4.500 8.500h8" stroke="#777" strokeWidth="2" />
        </Svg>
        <div className="ml-auto mr-[15px]"><Dots /></div>
        <div className="mr-[24px] mt-[2px] flex h-[15px] w-[560px] bg-[#dadada]">
          <div className="flex w-[15px] items-center justify-center border border-[#ababab] bg-white"><Svg w={4} h={8}><path d="M4 0v8L0 4z" fill="#555" /></Svg></div>
          <div className="w-[345px] border border-[#ababab] bg-white" />
          <div className="ml-auto flex w-[15px] items-center justify-center border border-[#ababab] bg-white"><Svg w={4} h={8}><path d="M0 0v8l4-4z" fill="#555" /></Svg></div>
        </div>
      </div>
    </div>
  );
}

function StatusBar() {
  return (
    <div className="flex h-[21px] shrink-0 items-center bg-[#f3f2f1] text-[#444]">
      <Svg w={15} h={13} className="ml-[8px]">
        <path d="M6 10.500H0.500V0.500h13V4M0.500 2.500h13M2.500 5h4M2.500 7.500h3" stroke="currentColor" />
        <circle cx="9.500" cy="8" r="4" stroke="currentColor" />
        <circle cx="9.500" cy="8" r="1.800" fill="currentColor" />
      </Svg>
      <div className="ml-auto flex h-full w-[40px] items-center justify-center bg-[#c8c6c4]">
        <Svg w={14} h={13}><path d="M0.500 0.500h13v12H0.500zM0.500 4.500h13M0.500 8.500h13M4.800 0.500v12M9.200 0.500v12" stroke="#222" /></Svg>
      </div>
      <Svg w={14} h={13} className="ml-[13px]"><path d="M0.500 0.500h13v12H0.500zM3.500 2.500h7v8h-7zM5 4.500h4M5 6.500h4M5 8.500h4" stroke="#444" /></Svg>
      <Svg w={14} h={13} className="ml-[26px]"><path d="M0.500 0.500h13v12H0.500zM4.500 0.500v7h5v-7M0.500 7.500h4" stroke="#444" /></Svg>
      <div className="ml-[19px] h-px w-[8px] bg-[#444]" />
      <div className="ml-[5px] flex h-[11px] w-[100px] items-center">
        <div className="h-px w-[48px] bg-[#aaa]" />
        <div className="h-[11px] w-[5px] bg-[#666]" />
        <div className="h-px grow bg-[#aaa]" />
      </div>
      <Svg w={8} h={8} className="ml-[5px]"><path d="M4 0v8M0 4h8" stroke="#444" /></Svg>
      <T w={27} className="ml-[13px] mr-[8px] text-[11px]">100%</T>
    </div>
  );
}

/* ------------------------------------------------------------------ taskbar */

function Task({ children, active, line = "w-[40px]", open }: Kids & { active?: boolean; line?: string; open?: boolean }) {
  return (
    <div className={"mr-px flex h-[40px] w-[48px] shrink-0 flex-col items-center " + (active ? "bg-[#4a4a4a]" : "")}>
      <div className="flex h-[38px] items-center pt-[2px]">{children}</div>
      {open && <div className={"h-[2px] bg-[#76b9ed] " + line} />}
    </div>
  );
}

function Briefcase({ w, h }: { w: number; h: number }) {
  return (
    <svg width={w} height={h} viewBox="0 0 31 25" className="block">
      <path d="M11 4V1.500h9V4" fill="none" stroke="#333" strokeWidth="2.500" />
      <rect y="4" width="31" height="21" rx="1.500" fill="#b36200" />
      <path d="M0 5.500C0 4.500.5 4 1.500 4h28c1 0 1.500.5 1.500 1.500V15H0z" fill="#f29400" />
      <rect x="12.500" y="13" width="6" height="5" rx="1" fill="#ffd93b" />
    </svg>
  );
}

function Taskbar() {
  return (
    <div className="flex h-[40px] shrink-0 items-center bg-[#1c1c1c] text-white">
      <Svg w={16} h={16} className="ml-[16px]">
        <path d="M0 2.300 6.500 1.400v6.200H0zM7.500 1.200 16 0v7.600H7.500zM0 8.500h6.500v6.200L0 13.800zM7.500 8.500H16V16l-8.500-1.200z" fill="#fff" />
      </Svg>
      <div className="ml-[16px] flex h-[40px] w-[288px] items-center border border-[#bbb] bg-[#f3f3f3] text-[#333]">
        <Svg w={17} h={17} className="ml-[11px]">
          <circle cx="10.500" cy="6.500" r="5.500" stroke="#222" strokeWidth="1.300" />
          <path d="M6.500 10.500 0.700 16.300" stroke="#222" strokeWidth="1.300" />
        </Svg>
        <T w={128} className="ml-[11px] text-[15px]">Type here to search</T>
        <div className="ml-auto mr-[4px] flex h-[32px] w-[72px] items-center justify-center rounded-[6px] bg-[#e3e3e3]"><Briefcase w={31} h={25} /></div>
      </div>
      <Svg w={17} h={16} className="ml-[15px] mr-[14px]">
        <path d="M0.500 0v2.500h11V0M0.500 16v-2.500h11V16M0.500 5h11v6h-11zM15 0v4M15 8.500V16" stroke="#fff" strokeWidth="1.100" />
        <path d="M13.500 4.500h3v3h-3z" fill="#fff" />
      </Svg>
      <div className="ml-[5px] flex">
        <Task open>
          <Svg w={24} h={24}>
            <circle cx="12" cy="12" r="12" fill="#fbc116" />
            <path d="M12 12 1.600 6A12 12 0 0 1 22.400 6z" fill="#e33b2e" />
            <path d="M1.600 6A12 12 0 0 0 12 24l5-9-10 0z" fill="#269f49" />
            <path d="M12 6h10.400A12 12 0 0 1 12 24l5.200-9z" fill="#fbc116" />
            <circle cx="12" cy="12" r="6" fill="#fff" />
            <circle cx="12" cy="12" r="4.600" fill="#1a73e8" />
          </Svg>
        </Task>
        <Task open>
          <Svg w={24} h={24}>
            <path d="M0.500 10C1.500 4 6 0 12 0c8 0 12 5.500 12 10.500 0 4-3 6-6.500 6-2.500 0-4-1-3.500-2 2-2 1.500-6-2.500-6.500C6 7 2 9 0.500 10z" fill="#2bb6d8" />
            <path d="M14 0.200C21 1 24 6 24 10.500c0 4-3 6-6.500 6-2.500 0-4-1-3.500-2 1-1 1.500-2.500 1-4C19 10 18 3 14 .2z" fill="#4fd08a" />
            <path d="M0.300 10C3 6.500 9 6 12.500 8.500 9 8 7 11 7.500 14c.5 5 4.500 7.500 9.500 6.500C12 25.500 0 25 0 12z" fill="#1683d8" />
            <path d="M9 12c-2 6 5 9.500 13 5.500-2 4-6 6.500-10 6.500C7 22 6 16 9 12z" fill="#0c4f9a" />
            <path d="M0 16h12v8H0z" fill="#b36200" />
            <path d="M0 16h12v4H0z" fill="#f29400" />
            <path d="M4 16v-1.500h4V16" stroke="#333" />
            <path d="M5 19h2v2H5z" fill="#ffd93b" />
          </Svg>
        </Task>
        <Task>
          <Svg w={24} h={22}>
            <path d="M6 1c0-.5.500-1 1-1h14c.5 0 1 .5 1 1v15H6z" fill="#1490df" />
            <path d="M14 0h8v7h-8z" fill="#50b5f0" />
            <path d="M6 2h8v6H6z" fill="#0f6fc5" />
            <path d="M5 12l10 3 9-5v11H5z" fill="#1d8fe0" />
            <path d="M24 10v11H10z" fill="#50b5f0" />
            <path d="M10 14l14 7H6z" fill="#1270c8" />
            <rect y="5" width="12" height="12" rx="1" fill="#0a64c0" />
            <ellipse cx="6" cy="11" rx="2.600" ry="3" stroke="#fff" strokeWidth="1.600" />
          </Svg>
        </Task>
        <Task open>
          <Svg w={22} h={19}>
            <path d="M0 1h8l2 2h12v15H0z" fill="#e9a21b" />
            <path d="M0 4h22v14.500H0z" fill="#ffd766" />
            <path d="M4 18.500V11h14v7.500h-4V15H8v3.500z" fill="#3f93dc" />
          </Svg>
        </Task>
        <Task>
          <Svg w={23} h={24}>
            <path d="M6.500 6V1.500h10V6" stroke="#2fa8e8" strokeWidth="2" />
            <path d="M0 5.500h23V20c0 2-1 3.500-3 3.500H3C1 23.500 0 22 0 20z" fill="#f7f7f7" />
            <path d="M7 9.500h4v4H7z" fill="#e74c25" />
            <path d="M12 9.500h4v4h-4z" fill="#7cb811" />
            <path d="M7 14.500h4v4H7z" fill="#1ea0e0" />
            <path d="M12 14.500h4v4h-4z" fill="#fbb60e" />
          </Svg>
        </Task>
        <Task open>
          <Svg w={24} h={24}>
            <path d="M0 0h24v24H0z" fill="#0a6fe0" />
            <path d="M16 0h8v24h-8L10 12z" fill="#2a9df0" />
            <path d="M10 4.500C6 5.500 5.500 10 9 11.500l5 2c3 1.500 2.500 5-.5 6" stroke="#fff" strokeWidth="2.600" />
            <path d="M14 4.500v3.500M9.500 16v3.500" stroke="#fff" strokeWidth="2.200" strokeLinecap="round" />
            <circle cx="17" cy="9.500" r="1.300" fill="#fff" />
            <circle cx="7" cy="15" r="1.300" fill="#fff" />
          </Svg>
        </Task>
        <Task>
          <Svg w={24} h={24}>
            <path d="M0 0h24v24H0z" fill="#7b3796" />
            <path d="M24 0v24H3l9-10z" fill="#5c2878" />
            <path d="M8 5c1-3.500 7-3.500 8 0" stroke="#fff" strokeWidth="2" />
            <path d="M9 8c-3.500 1-3 8.500-1 10M15 8c3.500 1 3 8.500 1 10M9.500 19.500h5" stroke="#fff" strokeWidth="2.200" />
            <circle cx="12" cy="8.500" r="1.500" fill="#fff" />
          </Svg>
        </Task>
        <Task open>
          <Svg w={24} h={24}>
            <path d="M0 0h24v24H0z" fill="#ff4136" />
            <path d="M9.500 7l5 5-5 5-5-5z" fill="#fff" />
            <path d="M13.500 7.500 18 12l-4.500 4.500" stroke="#fff" strokeWidth="2" />
          </Svg>
        </Task>
        <Task active open line="w-full">
          <Svg w={24} h={22}>
            <path d="M6 0h9v22H6z" fill="#21a366" />
            <path d="M15 0h9v6h-9z" fill="#33c481" />
            <path d="M15 6h9v5.500h-9z" fill="#21a366" />
            <path d="M6 11.500h9v5H6z" fill="#107c41" />
            <path d="M15 11.500h9v5h-9z" fill="#107c41" />
            <path d="M6 16.500h18V22H6z" fill="#185c37" />
            <path d="M0 5h12v12H0z" fill="#107c41" />
            <path d="M3.500 7.500l5 7M8.500 7.500l-5 7" stroke="#fff" strokeWidth="1.700" />
          </Svg>
        </Task>
      </div>
      <Svg w={18} h={24} className="ml-auto">
        <path d="M0 1.500C0 .5.500 0 1.500 0H12l6 6v16.500c0 1-.5 1.500-1.500 1.500h-15C.5 24 0 23.500 0 22.500z" fill="#35a9ea" />
        <path d="M12 0l6 6h-6z" fill="#a5dcf8" />
        <path d="M2 8.500h3.500v6H2zM7.500 12h3v2.500h-3zM12 8.500h3.500v6H12z" fill="#0b62b5" />
        <path d="M2 17.500h14M2 20.500h10" stroke="#fff" strokeWidth="1.500" />
      </Svg>
      <T w={119} className="ml-[12px] text-[14.500px]">Earnings upcoming</T>
      <Svg w={12} h={7} className="ml-[25px]"><path d="M0.700 6.300 6 1l5.300 5.300" stroke="#fff" strokeWidth="1.200" /></Svg>
      <Svg w={17} h={14} className="ml-[10px]"><path d="M5 1.500h11.500v8h-12V7M0.500 0.500h4v4h-4zM2.500 4.500v4M7 13h7M10.500 9.500V13" stroke="#fff" strokeWidth="1.100" /></Svg>
      <Svg w={15} h={13} className="ml-[7px]"><path d="M0.500 4.500h2.500l4-4v12l-4-4H0.500zM9.500 4.500l4.500 4.500M14 4.500 9.500 9" stroke="#fff" strokeWidth="1.100" /></Svg>
      <T w={24} className="ml-[11px] text-[12px]">ENG</T>
      <div className="ml-[12px] flex h-[40px] w-[53px] flex-col items-center justify-center gap-[6px] pb-px text-[12px]">
        <T w={44}>8:15 AM</T>
        <T w={53}>11/9/2023</T>
      </div>
      <Svg w={16} h={16} className="ml-[18px]"><path d="M0.500 0.500h15v12H10L8 15l-2-2.500H0.500z" stroke="#fff" /></Svg>
      <div className="ml-[20px] mr-[4px] h-full w-px bg-[#555]" />
    </div>
  );
}

export default function App() {
  return (
    <div className="flex h-[1080px] w-[1920px] flex-col overflow-hidden bg-[#e6e6e6] font-['Open_Sans','Noto_Sans_CJK_KR',sans-serif] leading-none">
      <TitleBar />
      <div className="h-[127px] shrink-0 bg-[#f3f2f1]">
        <TabRow />
        <Ribbon />
      </div>
      <WarningBar />
      <FormulaBar />
      <Sheet />
      <SheetTabs />
      <StatusBar />
      <Taskbar />
    </div>
  );
}
